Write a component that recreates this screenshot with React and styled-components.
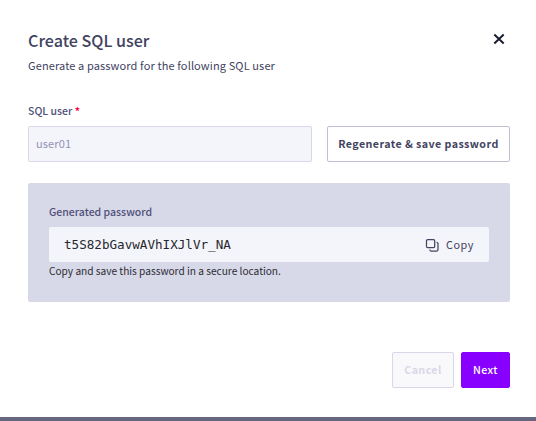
import React from "react";
import styled, { createGlobalStyle } from "styled-components";

const GlobalStyle = createGlobalStyle`
  * { box-sizing: border-box; }
  html, body { margin: 0; padding: 0; background: #fff; }
  body, button, input { font-family: "Noto Sans CJK SC", "Noto Sans", sans-serif; }
`;

const Dialog = styled.main`
  display: flex;
  flex-direction: column;
  width: 536px;
  height: 421px;
  padding: 27px 26px 0 28px;
  background: #fff;
  border-bottom: 4px solid #65677f;
  color: #41435f;
`;

const Header = styled.header`
  display: flex;
  justify-content: space-between;
  height: 73px;
`;

const Title = styled.h1`
  margin: 0;
  font-size: 16.1px;
  line-height: 26px;
  font-weight: 500;
`;

const Subtitle = styled.p`
  margin: 2px 0 0;
  font-size: 11px;
  line-height: 20px;
  letter-spacing: 0.12px;
`;

const CloseButton = styled.button`
  display: flex;
  width: 22px;
  height: 22px;
  margin-top: 1px;
  padding: 5px;
  border: 0;
  background: none;
  color: #1b1e32;
`;

const Label = styled.label`
  display: block;
  height: 26px;
  font-size: 10.5px;
  line-height: 22px;
  font-weight: 500;
  color: #4f5079;
`;

const Required = styled.span`
  color: #f4093c;
  font-weight: 700;
`;

const FieldRow = styled.div`
  display: grid;
  grid-template-columns: 284px 183px;
  gap: 15px;
`;

const Input = styled.input`
  width: 100%;
  height: 36px;
  padding: 0 7px 2px;
  border: 1px solid #d7d8e8;
  border-radius: 2px;
  background: #f4f5fa;
  color: #9391b7;
  font-size: 11px;
  letter-spacing: 0.12px;
`;

const colors = {
  outline: ["#fff", "#bfbfd6", "#41435f"],
  disabled: ["#f9f9fc", "#d9d7e9", "#d9d7e9"],
  primary: ["#8800ff", "#8800ff", "#fff"],
};

const Button = styled.button`
  height: 36px;
  width: ${(p) => p.$width}px;
  padding: 0 0 1px;
  border: 1px solid ${(p) => colors[p.$kind][1]};
  border-radius: 2px;
  background: ${(p) => colors[p.$kind][0]};
  color: ${(p) => colors[p.$kind][2]};
  font-size: 10.7px;
  line-height: 33px;
  font-weight: ${(p) => p.$weight || 700};
  letter-spacing: 0.42px;
  white-space: nowrap;
`;

const Panel = styled.section`
  height: 119px;
  margin-top: 21px;
  padding: 18px 21px 0;
  border-radius: 2px;
  background: #d7d8e8;
`;

const PasswordBox = styled.div`
  display: flex;
  align-items: center;
  justify-content: space-between;
  height: 35px;
  padding: 0 15px;
  border-radius: 2px;
  background: #f4f5fa;
`;

const Password = styled.code`
  font-family: "DejaVu Sans Mono", monospace;
  font-size: 12.6px;
  line-height: 20px;
  color: #26272d;
`;

const CopyButton = styled.button`
  display: flex;
  align-items: center;
  gap: 7px;
  padding: 0;
  border: 0;
  background: none;
  color: #41435f;
  font-size: 10.8px;
  line-height: 20px;
  letter-spacing: 0.6px;
`;

const CopyText = styled.span`
  padding-bottom: 1px;
  line-height: 18px;
`;

const Hint = styled.p`
  margin: -1px 0 0;
  color: #2c2d33;
  font-size: 10.14px;
  line-height: 19px;
`;

const Footer = styled.footer`
  display: flex;
  justify-content: flex-end;
  gap: 7px;
  margin-top: 50px;
`;

const CloseIcon = () => (
  <svg width="12" height="12" viewBox="0 0 12 12" fill="none" stroke="currentColor" strokeWidth="2">
    <path d="M1.3 1.5 10.7 10.5M10.7 1.5 1.3 10.5" />
  </svg>
);

const CopyIcon = () => (
  <svg width="14" height="14" viewBox="0 0 14 14" fill="none" stroke="currentColor" strokeWidth="1.25">
    <rect x="1.5" y="1.5" width="8.2" height="8.2" rx="1.2" />
    <path d="M11.6 4.4a1.4 1.4 0 0 1 1.4 1.4v5.8a1.4 1.4 0 0 1-1.4 1.4H6.2a1.4 1.4 0 0 1-1.4-1.4" />
  </svg>
);

export default function App() {
  return (
    <>
      <GlobalStyle />
      <Dialog>
        <Header>
          <div>
            <Title>Create SQL user</Title>
            <Subtitle>Generate a password for the following SQL user</Subtitle>
          </div>
          <CloseButton aria-label="Close"><CloseIcon /></CloseButton>
        </Header>
        <Label htmlFor="sql-user">SQL user <Required>*</Required></Label>
        <FieldRow>
          <Input id="sql-user" value="user01" disabled readOnly />
          <Button $kind="outline" $width={183}>Regenerate &amp; save password</Button>
        </FieldRow>
        <Panel>
          <Label as="div">Generated password</Label>
          <PasswordBox>
            <Password>t5S82bGavwAVhIXJlVr_NA</Password>
            <CopyButton><CopyIcon /><CopyText>Copy</CopyText></CopyButton>
          </PasswordBox>
          <Hint>Copy and save this password in a secure location.</Hint>
        </Panel>
        <Footer>
          <Button $kind="disabled" $width={62} disabled>Cancel</Button>
          <Button $kind="primary" $width={49} $weight={500}>Next</Button>
        </Footer>
      </Dialog>
    </>
  );
}
